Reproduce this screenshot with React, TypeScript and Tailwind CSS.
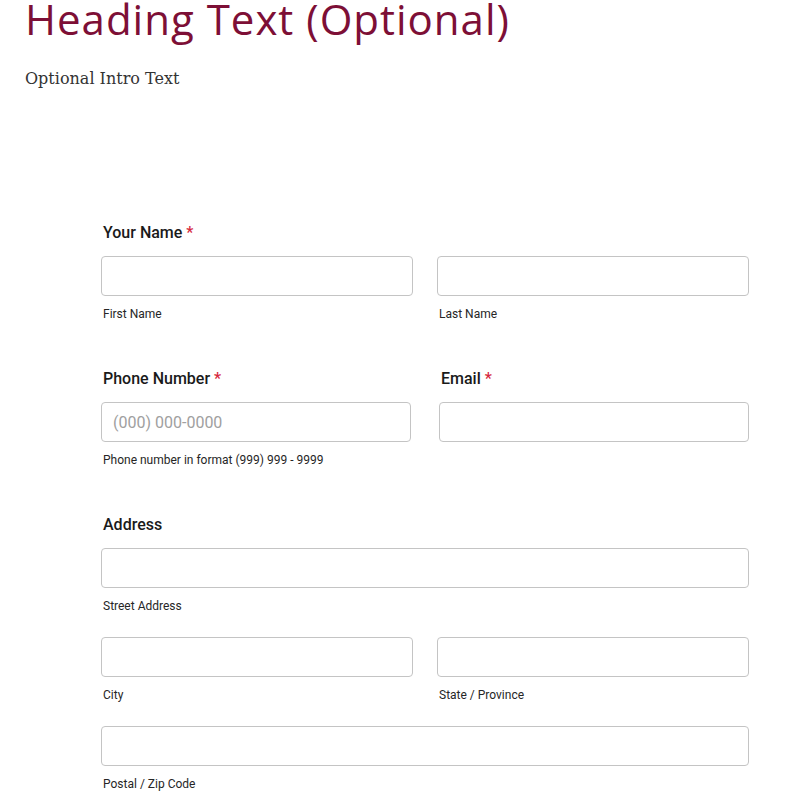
import React from "react";

function Label({ text, required }: { text: string; required?: boolean }) {
  return (
    <p className="h-6 text-[16px] leading-6 font-medium text-[#1a1a1a] pl-[2px]">
      {text}
      {required && <span className="ml-1 text-[#d6293e]">*</span>}
    </p>
  );
}

function Field({
  sub,
  placeholder,
  className
}: {
  sub?: string;
  placeholder?: string;
  className?: string;
}) {
  return (
    <div className={className}>
      <input
        className="block w-full h-10 px-[11px] border border-[#c4c4c4] rounded bg-white text-[16px] placeholder:text-[#a0a0a0] outline-none"
        placeholder={placeholder}
      />
      {sub && (
        <p className="mt-[10px] h-4 pl-[2px] text-[12px] leading-4 text-[#262626]">
          {sub}
        </p>
      )}
    </div>
  );
}

function App() {
  return (
    <div className="w-[786px] h-[797px] overflow-hidden bg-white px-[25px] font-['Roboto',sans-serif]">
      <h1 className="h-[38px] text-[42px] leading-[38px] tracking-[1px] text-[#7d0f36] font-['Open_Sans',sans-serif]">
        Heading Text (Optional)
      </h1>
      <p className="mt-[29px] text-[16px] leading-6 text-[#333] font-['DejaVu_Serif',serif]">
        Optional Intro Text
      </p>
      <div className="ml-[76px] w-[648px] mt-[130px]">
        <Label text="Your Name" required />
        <div className="flex justify-between mt-[11px]">
          <Field className="w-[312px]" sub="First Name" />
          <Field className="w-[312px]" sub="Last Name" />
        </div>
        <div className="flex justify-between mt-[45px]">
          <div className="w-[310px]">
            <Label text="Phone Number" required />
            <Field
              className="mt-[11px]"
              placeholder="(000) 000-0000"
              sub="Phone number in format (999) 999 - 9999"
            />
          </div>
          <div className="w-[310px]">
            <Label text="Email" required />
            <Field className="mt-[11px]" />
          </div>
        </div>
        <div className="mt-[45px]">
          <Label text="Address" />
          <Field className="mt-[11px]" sub="Street Address" />
          <div className="flex justify-between mt-[23px]">
            <Field className="w-[312px]" sub="City" />
            <Field className="w-[312px]" sub="State / Province" />
          </div>
          <Field className="mt-[23px]" sub="Postal / Zip Code" />
        </div>
      </div>
    </div>
  );
}

export default App;
